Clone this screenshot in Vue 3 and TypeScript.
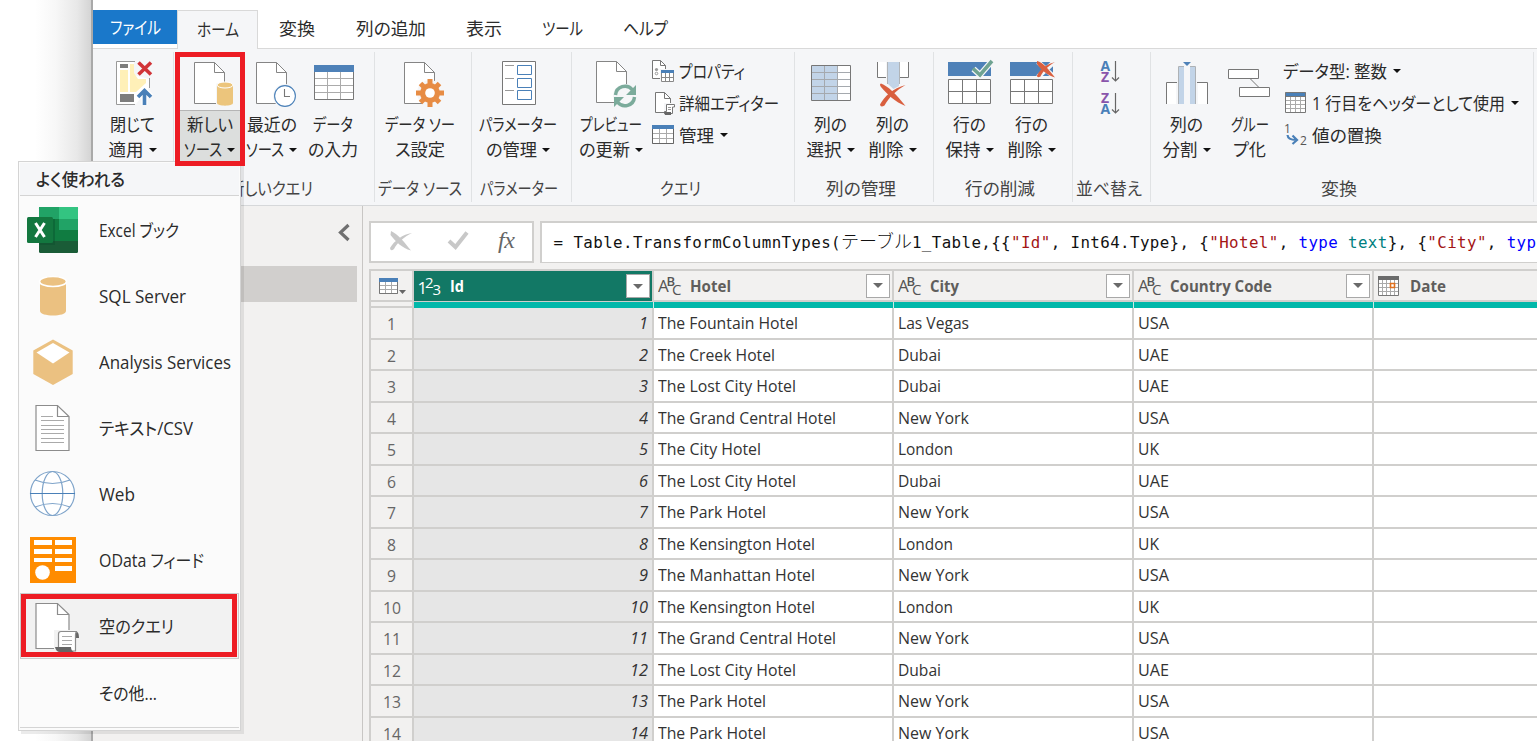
<script setup lang="ts">
import type { Directive } from 'vue'

interface Line { text: string; w: number; arrow?: boolean }
interface Button { id: string; x: number; w: number; lines: Line[]; open?: boolean }
interface Small { id: string; text: string; w: number; arrow?: boolean }
interface Group { label: string; labelW: number; w: number; pad: number; buttons: Button[]; small?: Small[] }

// Scales a run of text horizontally to the given advance width.
const vFit: Directive<HTMLElement, number> = {
  mounted(el, { value }) {
    const natural = el.getBoundingClientRect().width
    el.style.transformOrigin = '0 50%'
    el.style.transform = `scaleX(${value / natural})`
    el.style.marginRight = `${value - natural}px`
  },
}

const tabs = [
  { text: '変換', w: 36, left: 21 },
  { text: '列の追加', w: 70, left: 41 },
  { text: '表示', w: 36, left: 40 },
  { text: 'ツール', w: 41, left: 40 },
  { text: 'ヘルプ', w: 45, left: 40 },
]

const groups: Group[] = [
  { label: '', labelW: 0, w: 81, pad: 7, buttons: [
    { id: 'close', x: 100, w: 66, lines: [{ text: '閉じて', w: 45 }, { text: '適用', w: 35, arrow: true }] },
  ] },
  { label: '新しいクエリ', labelW: 84, w: 201, pad: 6, buttons: [
    { id: 'new', x: 180, w: 60, open: true, lines: [{ text: '新しい', w: 46 }, { text: 'ソース', w: 38, arrow: true }] },
    { id: 'recent', x: 240, w: 64, lines: [{ text: '最近の', w: 50 }, { text: 'ソース', w: 38, arrow: true }] },
    { id: 'enter', x: 304, w: 58, lines: [{ text: 'データ', w: 40 }, { text: 'の入力', w: 50 }] },
  ] },
  { label: 'データ ソース', labelW: 84, w: 97, pad: 0, buttons: [
    { id: 'settings', x: 375, w: 90, lines: [{ text: 'データ ソー', w: 70 }, { text: 'ス設定', w: 50 }] },
  ] },
  { label: 'パラメーター', labelW: 78, w: 100, pad: 0, buttons: [
    { id: 'params', x: 472, w: 93, lines: [{ text: 'パラメーター', w: 78 }, { text: 'の管理', w: 51, arrow: true }] },
  ] },
  { label: 'クエリ', labelW: 41, w: 223, pad: 0, buttons: [
    { id: 'preview', x: 572, w: 79, lines: [{ text: 'プレビュー', w: 62 }, { text: 'の更新', w: 51, arrow: true }] },
  ], small: [
    { id: 'props', text: 'プロパティ', w: 66 },
    { id: 'editor', text: '詳細エディター', w: 100 },
    { id: 'manage', text: '管理', w: 35, arrow: true },
  ] },
  { label: '列の管理', labelW: 70, w: 139, pad: 5, buttons: [
    { id: 'colpick', x: 800, w: 62, lines: [{ text: '列の', w: 33 }, { text: '選択', w: 35, arrow: true }] },
    { id: 'coldel', x: 862, w: 62, lines: [{ text: '列の', w: 33 }, { text: '削除', w: 35, arrow: true }] },
  ] },
  { label: '行の削減', labelW: 70, w: 139, pad: 5, buttons: [
    { id: 'rowkeep', x: 939, w: 62, lines: [{ text: '行の', w: 33 }, { text: '保持', w: 35, arrow: true }] },
    { id: 'rowdel', x: 1001, w: 62, lines: [{ text: '行の', w: 33 }, { text: '削除', w: 35, arrow: true }] },
  ] },
  { label: '並べ替え', labelW: 66, w: 78, pad: 23, buttons: [
    { id: 'sort', x: 1096, w: 30, lines: [] },
  ] },
  { label: '変換', labelW: 36, w: 383, pad: 5, buttons: [
    { id: 'split', x: 1156, w: 62, lines: [{ text: '列の', w: 33 }, { text: '分割', w: 35, arrow: true }] },
    { id: 'groupby', x: 1218, w: 64, lines: [{ text: 'グルー', w: 38 }, { text: 'プ化', w: 33 }] },
  ], small: [
    { id: '', text: 'データ型: 整数', w: 104, arrow: true },
    { id: 'header', text: '1 行目をヘッダーとして使用', w: 193, arrow: true },
    { id: 'replace', text: '値の置換', w: 70 },
  ] },
]

const menu = [
  { id: 'excel', text: 'Excel ブック', w: 80 },
  { id: 'sql', text: 'SQL Server', w: 87 },
  { id: 'cube', text: 'Analysis Services', w: 132 },
  { id: 'csv', text: 'テキスト/CSV', w: 94 },
  { id: 'web', text: 'Web', w: 36 },
  { id: 'odata', text: 'OData フィード', w: 105 },
  { id: 'blank', text: '空のクエリ', w: 75 },
  { id: 'more', text: 'その他...', w: 58 },
]

const columns = [
  { name: 'Id', w: 14, kind: 'num' },
  { name: 'Hotel', w: 41, kind: 'abc' },
  { name: 'City', w: 29, kind: 'abc' },
  { name: 'Country Code', w: 102, kind: 'abc' },
  { name: 'Date', w: 36, kind: 'date' },
]

const widths: Record<string, number> = {
  'The Fountain Hotel': 140, 'The Creek Hotel': 117, 'The Lost City Hotel': 138, 'The Grand Central Hotel': 178,
  'The City Hotel': 103, 'The Park Hotel': 108, 'The Kensington Hotel': 157, 'The Manhattan Hotel': 157,
  'Las Vegas': 71, Dubai: 43, 'New York': 71, London: 55, USA: 31, UAE: 31, UK: 21,
}

const rows: string[][] = [
  ['The Fountain Hotel', 'Las Vegas', 'USA'],
  ['The Creek Hotel', 'Dubai', 'UAE'],
  ['The Lost City Hotel', 'Dubai', 'UAE'],
  ['The Grand Central Hotel', 'New York', 'USA'],
  ['The City Hotel', 'London', 'UK'],
  ['The Lost City Hotel', 'Dubai', 'UAE'],
  ['The Park Hotel', 'New York', 'USA'],
  ['The Kensington Hotel', 'London', 'UK'],
  ['The Manhattan Hotel', 'New York', 'USA'],
  ['The Kensington Hotel', 'London', 'UK'],
  ['The Grand Central Hotel', 'New York', 'USA'],
  ['The Lost City Hotel', 'Dubai', 'UAE'],
  ['The Park Hotel', 'New York', 'USA'],
  ['The Park Hotel', 'New York', 'USA'],
]
</script>

<template>
  <div class="screen">
    <aside class="edge"></aside>
    <div class="window">
      <nav class="tabs">
        <div class="tab file"><span v-fit="51" class="t">ファイル</span></div>
        <div class="tab home"><span v-fit="42" class="t">ホーム</span></div>
        <div v-for="t in tabs" :key="t.text" class="tab" :style="{ marginLeft: t.left + 'px' }">
          <span v-fit="t.w" class="t">{{ t.text }}</span>
        </div>
      </nav>

      <section class="ribbon">
        <div v-for="(g, gi) in groups" :key="gi" class="group" :style="{ width: g.w + 'px' }">
          <div class="body" :style="{ paddingLeft: g.pad + 'px' }">
            <div v-for="b in g.buttons" :key="b.id" class="btn" :style="{ width: b.w + 'px' }">
              <svg :width="b.w" :height="b.id === 'sort' ? 70 : 58" :viewBox="`${b.x} 52 ${b.w} ${b.id === 'sort' ? 70 : 58}`" fill="none">
                <template v-if="b.id === 'close'">
                  <path d="M135 61.500H116.500V104.500H135M149.500 78V88" stroke="#999" />
                  <path d="M117 62H134V75L149 79V88L136 104H117Z" fill="#fff" />
                  <path d="M120 70H128V92H120ZM130 64H134V73L138 79H146V83L136 92H130Z" fill="#fff0b8" />
                  <path d="M120 64H128V68H120ZM120 94H134V102H120Z" fill="#7d7d7d" />
                  <path d="M138.500 62.500L151 74.500M151 62.500L138.500 74.500" stroke="#d13438" stroke-width="3.600" />
                  <path d="M144.500 105V91M138 96.500L144.500 90L151 96.500" stroke="#fff" stroke-width="6" />
                  <path d="M144.500 105V91M138 97L144.500 90.500L151 97" stroke="#4a80b8" stroke-width="3.600" />
                </template>
                <template v-else-if="b.id === 'new'">
                  <path d="M194.500 62.500H214.500L224.500 72.500V103.500H194.500Z" fill="#fff" stroke="#858585" />
                  <path d="M214.500 62.500V72.500H224.500" stroke="#858585" />
                  <path d="M216 83.500H235V107H216Z" fill="#f5f6f8" />
                  <path d="M217 85V103C217 106.500 233 106.500 233 103V85Z" fill="#ecc57c" />
                  <ellipse cx="225" cy="85" rx="8" ry="3" fill="#ecc57c" stroke="#fff" />
                </template>
                <template v-else-if="b.id === 'recent'">
                  <path d="M256.500 62.500H276.500L286.500 72.500V103.500H256.500Z" fill="#fff" stroke="#858585" />
                  <path d="M276.500 62.500V72.500H286.500" stroke="#858585" />
                  <circle cx="285" cy="96" r="12" fill="#f5f6f8" />
                  <circle cx="285" cy="96" r="10.400" fill="#fff" stroke="#4a80b8" stroke-width="1.100" />
                  <path d="M284.500 89V96.500H290" stroke="#777" stroke-width="1.100" />
                </template>
                <template v-else-if="b.id === 'enter'">
                  <path d="M314.500 65.500H353.500V99.500H314.500Z" fill="#fff" />
                  <path d="M314 78.500H354M314 85.500H354M314 92.500H354M327.500 71V99M340.500 71V99" stroke="#ababab" />
                  <path d="M314.500 65.500H353.500V99.500H314.500Z" stroke="#777" />
                  <path d="M314 65H354V72H314Z" fill="#4e81b8" />
                </template>
                <template v-else-if="b.id === 'settings'">
                  <path d="M404.500 62.500H424.500L434.500 72.500V103.500H404.500Z" fill="#fff" stroke="#858585" />
                  <path d="M424.500 62.500V72.500H434.500" stroke="#858585" />
                  <circle cx="430" cy="93" r="13" fill="#f5f6f8" />
                  <g stroke="#e78c44" stroke-width="5">
                    <path d="M430 79V107M416 93H444M420.500 83.500L439.500 102.500M439.500 83.500L420.500 102.500" />
                  </g>
                  <circle cx="430" cy="93" r="10" fill="#e78c44" />
                  <circle cx="430" cy="93" r="4.800" fill="#fff" />
                </template>
                <template v-else-if="b.id === 'params'">
                  <path d="M502.500 61.500H535.500V104.500H502.500Z" fill="#fff" stroke="#777" />
                  <path d="M505 65.500H514M505 78.500H514M505 90.500H514" stroke="#999" />
                  <path d="M517.500 65.500H531.500V74.500H517.500ZM517.500 78.500H531.500V87.500H517.500ZM517.500 90.500H531.500V99.500H517.500Z" stroke="#4a80b8" />
                </template>
                <template v-else-if="b.id === 'preview'">
                  <path d="M596.500 61.500H616.500L626.500 71.500V102.500H596.500Z" fill="#fff" stroke="#858585" />
                  <path d="M616.500 61.500V71.500H626.500" stroke="#858585" />
                  <circle cx="625" cy="96" r="12" fill="#f5f6f8" />
                  <path d="M615.500 95A9.500 9.500 0 0 1 632.500 90M634.500 97A9.500 9.500 0 0 1 617.500 102" stroke="#7bab9b" stroke-width="3.400" />
                  <path d="M636 85V95H626ZM614 107V97H624Z" fill="#7bab9b" />
                </template>
                <template v-else-if="b.id === 'colpick'">
                  <path d="M811.500 65.500H850.500V100.500H811.500Z" fill="#fff" />
                  <path d="M812 66H837V100H812Z" fill="#c2d4e8" />
                  <path d="M812 72.500H850M812 79.500H850M812 86.500H850M812 93.500H850M824.500 66V100M837.500 66V100" stroke="#a5a9ae" />
                  <path d="M811.500 65.500H850.500V100.500H811.500Z" stroke="#777" />
                </template>
                <template v-else-if="b.id === 'coldel'">
                  <path d="M877.500 62V77.500H886V62M908.500 62V77.500H900V62" fill="#fff" />
                  <path d="M877.500 62V77.500H886M908.500 62V77.500H900" stroke="#777" />
                  <path d="M888 62H899V86L893.500 89L888 84Z" fill="#c2d4e8" />
                  <path d="M887.500 62V84M899.500 62V84" stroke="#b0b4b8" />
                  <path d="M881 83.500C888 86 896 94 905.500 106C895 102 888 95 881 87Q879 84 881 83.500Z" fill="#d95f3f" />
                  <path d="M905.500 85C897 90 889 97 884.500 105.500Q880.500 108 880 104.500C884 97 893 88 905.500 85Z" fill="#d95f3f" />
                </template>
                <template v-else-if="b.id === 'rowkeep'">
                  <path d="M948 62H991V76H948Z" fill="#4e81b8" />
                  <path d="M948.500 79.500H990.500V103.500H948.500ZM948.500 91.500H990.500M962.500 79.500V103.500M976.500 79.500V103.500" fill="#fff" stroke="#777" />
                  <path d="M973.500 69L980 75L992 61" stroke="#f5f6f8" stroke-width="6" />
                  <path d="M973 68.500L980 75L992 61" stroke="#6fa391" stroke-width="3.600" />
                </template>
                <template v-else-if="b.id === 'rowdel'">
                  <path d="M1010 62H1053V76H1010Z" fill="#4e81b8" />
                  <path d="M1010.500 79.500H1052.500V103.500H1010.500ZM1010.500 91.500H1052.500M1024.500 79.500V103.500M1038.500 79.500V103.500" fill="#fff" stroke="#777" />
                  <path d="M1038 62L1054 77M1054 62L1038 77" stroke="#f5f6f8" stroke-width="5" />
                  <path d="M1037 61C1043 62 1049 70 1055 77.500C1047 75 1041 70 1037 64ZM1055 62C1048 66 1043 71 1040.500 76.500Q1037 78.500 1037 75.500C1040 69 1047 64 1055 62Z" fill="#d95f3f" />
                </template>
                <template v-else-if="b.id === 'sort'">
                  <g class="az">
                    <text x="1100.500" y="70.500" fill="#4a80b8">A</text><text x="1101" y="82" fill="#8a55ab">Z</text>
                    <text x="1101" y="102.500" fill="#8a55ab">Z</text><text x="1100.500" y="114" fill="#4a80b8">A</text>
                  </g>
                  <path d="M1115.500 61V81M1112 77.500L1115.500 81L1119 77.500M1115.500 93V113M1112 109.500L1115.500 113L1119 109.500" stroke="#666" stroke-width="1.200" />
                </template>
                <template v-else-if="b.id === 'split'">
                  <path d="M1166.500 104V82.500H1176V104M1207.500 104V82.500H1198V104" fill="#fff" stroke="none" />
                  <path d="M1166.500 104V82.500H1177M1207.500 104V82.500H1197" stroke="#777" />
                  <path d="M1179 66H1184V104H1179ZM1190 66H1195V104H1190Z" fill="#c2d4e8" />
                  <path d="M1178.500 104V66.500H1184M1195.500 104V66.500H1190" stroke="#aeb2b6" />
                  <path d="M1183 62H1191L1187 66Z" fill="#4e81b8" />
                </template>
                <template v-else-if="b.id === 'groupby'">
                  <path d="M1228.500 69.500H1258.500V78.500H1228.500ZM1239.500 87.500H1269.500V96.500H1239.500Z" fill="#fff" stroke="#777" />
                  <path d="M1250.500 79L1258.500 87" stroke="#777" />
                </template>
              </svg>
              <div v-if="b.lines.length" class="cap" :class="{ open: b.open }">
                <div v-for="l in b.lines" :key="l.text" class="line">
                  <span v-fit="l.w" class="t">{{ l.text }}</span><i v-if="l.arrow" class="arrow"></i>
                </div>
              </div>
            </div>
            <div v-if="g.small" class="smalls" :class="{ wide: g.label === '変換' }">
              <div v-for="s in g.small" :key="s.text" class="small">
                <svg v-if="s.id" class="ico" width="24" height="24" fill="none">
                  <template v-if="s.id === 'props'">
                    <path d="M1.500 1.500H9.500L14.500 6.500V19.500H1.500Z" fill="#fff" stroke="#777" /><path d="M9.500 1.500V6.500H14.500" stroke="#777" />
                    <circle cx="5.500" cy="10.500" r="1.600" fill="#999" /><circle cx="5.500" cy="14.500" r="1.300" stroke="#999" />
                    <path d="M9 10H24V24H9Z" fill="#f5f6f8" /><path d="M10.500 11.500H22.500V22.500H10.500ZM10.500 18.500H22.500M14.500 12V22M18.500 12V22" fill="#fff" stroke="#888" /><path d="M10 11H23V14H10Z" fill="#4a80b8" />
                  </template>
                  <template v-else-if="s.id === 'editor'">
                    <path d="M4.500 1.500H13.500L19.500 7.500V21.500H4.500Z" fill="#fff" stroke="#777" /><path d="M13.500 1.500V7.500H19.500" stroke="#777" />
                    <path d="M13 12H24V24H13Z" fill="#f5f6f8" /><path d="M15.500 13.500H23.500V16H21.500V22.500H13.500V20.500H15.500Z" fill="#fff" stroke="#777" /><path d="M17 16.500H20M17 18.500H20" stroke="#999" /><path d="M13 21H20V24H14Z" fill="#666" />
                  </template>
                  <template v-else-if="s.id === 'manage'">
                    <path d="M1.500 2.500H22.500V20.500H1.500ZM1.500 10.500H22.500M1.500 15.500H22.500M8.500 5V20M15.500 5V20" fill="#fff" stroke="#aaa" /><path d="M1.500 2.500H22.500V20.500H1.500Z" stroke="#666" /><path d="M1 2H23V6H1Z" fill="#4a80b8" />
                  </template>
                  <template v-else-if="s.id === 'header'">
                    <path d="M2 1H23V22H2Z" fill="#fff" /><path d="M2 9.500H23M2 13.500H23M2 17.500H23M7.500 5V21M12.500 5V21M17.500 5V21" stroke="#aaa" /><path d="M2 1.500H23V5H2Z" fill="#4a80b8" /><path d="M2.500 1.500H22.500V21.500H2.500ZM2.500 5.500H22.500" stroke="#777" />
                  </template>
                  <template v-else-if="s.id === 'replace'">
                    <text x="1" y="10" class="n">1</text><text x="17" y="21.500" class="n">2</text>
                    <path d="M4.500 12Q5 17 13 17M9.500 12.500L14 17L9.500 21" stroke="#4a80b8" stroke-width="2.200" />
                  </template>
                </svg>
                <span v-fit="s.w" class="t">{{ s.text }}</span><i v-if="s.arrow" class="arrow"></i>
              </div>
            </div>
          </div>
          <div class="label"><span v-if="g.label" v-fit="g.labelW" class="t">{{ g.label }}</span></div>
        </div>
      </section>

      <main class="work">
        <div class="queries">
          <svg class="chev" width="13" height="19" viewBox="337 223 13 19" fill="none"><path d="M348.500 225L340.500 232.500L348.500 240" stroke="#707070" stroke-width="3.200" /></svg>
          <div class="selected"></div>
        </div>
        <div class="editor">
          <div class="formula">
            <div class="tools">
              <svg width="161" height="38" viewBox="371 223 161 38" fill="none">
                <path d="M391 231C398 234 405 243 411 250.500C402 248 396 242 390.500 235ZM412 233C404 237 397 243 394 249Q390.500 252 390 248C394 241 403 234 412 233Z" fill="#c8c8c8" />
                <path d="M449 241L455.500 247L467 232.500" stroke="#c8c8c8" stroke-width="4" />
                <text x="498" y="247.500" class="fx" textLength="17">fx</text>
              </svg>
            </div>
            <div class="code"><span>= Table.TransformColumnTypes(</span><span class="jp">テーブル</span><span>1_Table,{{ '{' }}{{ '{' }}<b>"Id"</b>, Int64.Type}, {<b>"Hotel"</b>, <em>type</em> <u>text</u>}, {<b>"City"</b>, <em>typ</em></span></div>
          </div>

          <div class="grid">
            <div class="ghead">
              <div class="corner">
                <svg width="41" height="29" viewBox="371 271 41 29" fill="none">
                  <path d="M379.500 278.500H397.500V293.500H379.500ZM379.500 285.500H397.500M379.500 289.500H397.500M385.500 281V293M391.500 281V293" fill="#fff" stroke="#aaa" /><path d="M379.500 278.500H397.500V293.500H379.500Z" stroke="#777" />
                  <path d="M379 278H398V282H379Z" fill="#4a80b8" /><path d="M399 290H406L402.500 294Z" fill="#666" />
                </svg>
              </div>
              <div v-for="c in columns" :key="c.name" class="hcell" :class="c.kind">
                <svg v-if="c.kind === 'num'" class="type" width="26" height="28"><text x="-.5" y="22" class="k n1" fill="#fff">1</text><text x="7" y="16" class="k s" fill="#fff">2</text><text x="14.500" y="23" class="k s" fill="#fff">3</text></svg>
                <svg v-else-if="c.kind === 'abc'" class="type" width="26" height="28"><text x="0" y="20" class="k a">A</text><text x="8.500" y="14" class="k b">B</text><text x="14" y="23" class="k c">C</text></svg>
                <svg v-else class="type" width="26" height="28" fill="none">
                  <path d="M.5 4.500H20.500V23.500H.5Z" fill="#fff" /><path d="M1 11.500H20M1 15.500H20M1 19.500H20M4.500 8V23M8.500 8V23M12.500 8V23M16.500 8V23" stroke="#aaa" /><path d="M.5 4.500H20.500V23.500H.5Z" stroke="#777" /><path d="M0 4H21V8H0Z" fill="#6b6b6b" /><path d="M12.500 11.500H16.500V15.500H12.500Z" fill="#fff" stroke="#e0701d" stroke-width="1.600" />
                </svg>
                <span class="hname"><span v-fit="c.w" class="t">{{ c.name }}</span></span>
                <span v-if="c.kind !== 'date'" class="drop"><i class="arrow"></i></span>
              </div>
            </div>
            <div class="quality"><span class="qn"></span><span v-for="c in columns" :key="c.name" class="q"></span></div>
            <div v-for="(r, i) in rows" :key="i" class="row">
              <div class="rn"><span v-fit="i < 9 ? 9 : 18" class="t">{{ i + 1 }}</span></div>
              <div class="cell id"><span v-fit="i < 9 ? 9 : 18" class="t">{{ i + 1 }}</span></div>
              <div v-for="(v, j) in r" :key="j" class="cell"><span v-fit="widths[v]" class="t">{{ v }}</span></div>
              <div class="cell"></div>
            </div>
          </div>
        </div>
      </main>
    </div>

    <div class="menu">
      <div class="mhead"><span v-fit="89" class="t">よく使われる</span></div>
      <div v-for="(m, i) in menu" :key="m.id" class="item" :class="{ hover: m.id === 'blank' }">
        <svg width="79" height="66" :viewBox="`20 ${197 + i * 66} 79 66`" fill="none">
          <template v-if="m.id === 'excel'">
            <rect x="39" y="207" width="39" height="46" rx="1.500" fill="#1a5c37" />
            <path d="M39 207H59V219H39Z" fill="#21a366" /><path d="M59 207H78V219H59Z" fill="#33c481" /><path d="M39 219H59V241H39Z" fill="#107c41" /><path d="M59 219H78V230H59Z" fill="#21a366" /><path d="M59 230H78V241H59Z" fill="#107c41" />
            <path d="M39 219H55V245H39Z" fill="#0b4e2a" opacity=".4" />
            <rect x="27" y="217" width="26" height="26" rx="1.500" fill="#13773f" />
            <path d="M35.500 223L44.500 237M44.500 223L35.500 237" stroke="#fff" stroke-width="3" />
          </template>
          <template v-else-if="m.id === 'sql'">
            <path d="M40 282V311C40 317 66 317 66 311V282Z" fill="#ebc181" /><ellipse cx="53" cy="281.500" rx="13.500" ry="5" fill="#ebc181" stroke="#fff" stroke-width="1.600" />
          </template>
          <template v-else-if="m.id === 'cube'">
            <path d="M53 339.500L72.700 350.500V374L53 385L33.300 374V350.500Z" fill="#ebc181" /><path d="M53 343L69.500 352.500L53 363.500L36.500 352.500Z" fill="#fff" />
          </template>
          <template v-else-if="m.id === 'csv'">
            <path d="M36 405.500H57.500L69 416.500V450.500H36Z" fill="#fff" stroke="#8c8c8c" stroke-width="1.200" /><path d="M57.500 405.500V416.500H69" stroke="#8c8c8c" stroke-width="1.200" />
            <path d="M41 416.500H53M41 420.500H64M41 425.500H64M41 429.500H64M41 433.500H64M41 438.500H64M41 442.500H64" stroke="#aaa" />
          </template>
          <template v-else-if="m.id === 'web'">
            <g stroke="#7fa4ca" stroke-width="1.200"><circle cx="52.500" cy="493.500" r="22" fill="#fff" /><ellipse cx="52.500" cy="493.500" rx="10.300" ry="22" /><path d="M35 480Q52.500 487 70 480M35 507Q52.500 500 70 507" /><path d="M30 493.500H75" stroke="#4a80b8" /></g>
          </template>
          <template v-else-if="m.id === 'odata'">
            <path d="M30 537H76V583H30Z" fill="#ff8c00" />
            <path d="M34 540H52V545H34ZM55 540H72V545H55ZM34 549H52V554H34ZM55 549H72V554H55ZM34 558H52V562H34ZM55 558H72V562H55ZM55 566H72V571H55Z" fill="#fff" /><circle cx="42.500" cy="572.500" r="8.500" fill="#ff8c00" /><circle cx="42.500" cy="572.500" r="7.300" fill="#fff" />
          </template>
          <template v-else-if="m.id === 'blank'">
            <path d="M36 603.500H57.500L69 614.500V648.500H36Z" fill="#fff" stroke="#8c8c8c" stroke-width="1.200" /><path d="M57.500 603.500V614.500H69" stroke="#8c8c8c" stroke-width="1.200" />
            <path d="M54 630H81V654H54Z" fill="#f2f2f2" /><path d="M76 631.500Q79 631.500 79 638H76Z" fill="#666" /><path d="M58.500 648V634Q58.500 631.500 61 631.500H77Q75.500 632 75.500 635V651H60Z" fill="#fff" stroke="#8c8c8c" stroke-width="1.200" />
            <path d="M62 636.500H72M62 640.500H72M62 644.500H72" stroke="#aaa" /><path d="M55 647H71Q71 651 74 652H60Q56 652 55 647Z" fill="#666" />
          </template>
        </svg>
        <span v-fit="m.w" class="t">{{ m.text }}</span>
      </div>
    </div>
    <div class="mark source"></div>
    <div class="mark query"></div>
  </div>
</template>

<style>
body { margin: 0; }
</style>

<style scoped>
* { box-sizing: border-box; }
.screen { position: relative; width: 1537px; height: 741px; overflow: hidden; display: flex; background: #fff; color: #2b2b2b; font: 17.5px/25px "Open Sans", "Noto Sans CJK JP", sans-serif; }
.t { display: inline-block; flex: none; white-space: pre; font-feature-settings: "palt"; }
.edge { width: 93px; flex: none; border-right: 2px solid #a9a9a9; background: linear-gradient(90deg, #fff 35px, #f7f7f7 56px, #e8e8e8 77px, #d4d4d4 91px); }
.window { flex: none; width: 1444px; height: 741px; display: flex; flex-direction: column; }
.tabs { height: 49px; flex: none; padding-top: 10px; display: flex; border-bottom: 1px solid #d9d9d9; }
.tab { display: flex; height: 37px; align-items: center; flex: none; }
.tab.file { width: 84px; height: 34px; justify-content: center; background: #1a78ca; color: #fff; }
.tab.home { width: 81px; height: 39px; justify-content: center; background: #f5f6f8; border: 1px solid #d9d9d9; border-bottom: 0; padding-bottom: 2px; }
.ribbon { height: 157px; flex: none; display: flex; background: #f5f6f8; border-bottom: 1px solid #d6d8da; padding-top: 3px; }
.group { flex: none; height: 150px; border-right: 1px solid #e0e2e4; display: flex; flex-direction: column; }
.body { display: flex; height: 123px; flex: none; }
.btn { flex: none; display: flex; flex-direction: column; }
.btn svg { display: block; flex: none; }
.cap { height: 51px; border-top: 1px solid transparent; padding-top: 1px; }
.cap.open { background: #dcdedd; border-color: #b5b5b5; }
.line { height: 25px; padding-right: 1px; display: flex; align-items: center; justify-content: center; }
.arrow { flex: none; width: 0; height: 0; margin-left: 5px; border: 4px solid transparent; border-top-color: #111; border-bottom: 0; }
.smalls { padding-top: 3px; }
.smalls.wide { padding-left: 1px; }
.small { height: 32px; display: flex; align-items: center; }
.small .arrow { margin-left: 6px; }
.ico { flex: none; margin-right: 4px; }
.wide .ico { margin-right: 5px; }
.az { font: bold 14px/1 "Open Sans", sans-serif; }
.n { font: 12px "Open Sans", sans-serif; fill: #555; }
.label { height: 26px; padding-right: 6px; display: flex; justify-content: center; align-items: center; color: #444; }
.work { flex: 1; display: flex; background: #f2f1f0; min-height: 0; }
.queries { width: 270px; flex: none; border-right: 1px solid #c8c6c4; }
.chev { display: block; margin: 17px 0 0 244px; }
.selected { width: 264px; height: 36px; margin-top: 24px; background: #d1cfcd; }
.editor { width: 1174px; padding: 15px 0 0 6px; overflow: hidden; }
.formula { display: flex; gap: 6px; height: 42px; }
.tools { width: 165px; flex: none; background: #fff; border: 2px solid #d0cfcd; }
.tools svg { display: block; }
.fx { font: italic 24px "Liberation Serif", serif; fill: #666; }
.code { flex: none; width: 1100px; overflow: hidden; background: #fff; border: 2px solid #d0cfcd; border-bottom-width: 1px; padding-left: 11.6px; color: #111; white-space: pre; font: 15.8px/36px "DejaVu Sans Mono", monospace; letter-spacing: .4px; }
.code b { font-weight: 400; color: #a31515; }
.code em { font-style: normal; color: #00f; }
.code u { text-decoration: none; color: #008080; }
.code .jp { font: 18px/35px "Noto Sans CJK JP", sans-serif; letter-spacing: 0; font-weight: 300; }
.grid { margin-top: 6px; width: 1300px; border: 2px solid #d0cfcd; }
.ghead { display: flex; height: 31px; }
.corner { width: 43px; flex: none; border-right: 2px solid #d0cfcd; border-bottom: 2px solid #d0cfcd; }
.corner svg { display: block; }
.hcell { width: 240px; flex: none; display: flex; align-items: center; padding-left: 4px; border-right: 2px solid #d0cfcd; border-bottom: 2px solid #d0cfcd; color: #605e5c; font-weight: 700; font-size: 15.5px; }
.hcell.num { background: #127865; color: #fff; border-bottom: 1px solid #d0cfcd; }
.type { flex: none; }
.hname { width: 182px; flex: none; padding: 1px 0 0 6px; display: flex; }
.k { font: 17px "Open Sans", sans-serif; }
.k.n1 { font-size: 17px; }
.k.s { font-size: 15px; }
.k.a { font-size: 17px; fill: #555; }
.k.b { font-size: 13px; fill: #555; font-weight: 600; }
.k.c { font-size: 15px; fill: #555; }
.drop { width: 24px; height: 24px; flex: none; border: 1px solid #a8a8a8; background: #fff; display: flex; align-items: center; justify-content: center; }
.drop .arrow { margin: 0; border-width: 5px; border-bottom: 0; border-top-color: #6a6a6a; }
.quality { display: flex; height: 6px; }
.qn { width: 43px; flex: none; border-right: 2px solid #d0cfcd; border-bottom: 2px solid #d0cfcd; }
.q { width: 240px; flex: none; background: #01b8aa; border-right: 1px solid #d0e8e4; }
.row { display: flex; height: 31.5px; font-size: 16px; }
.rn { width: 43px; flex: none; padding-top: 1.500px; display: flex; align-items: center; justify-content: center; border-right: 2px solid #d0cfcd; border-bottom: 2px solid #d0cfcd; color: #666; font-size: 17px; }
.cell { width: 240px; flex: none; padding: 1.500px 4px 0 4px; display: flex; align-items: center; background: #fff; border-right: 2px solid #d0cfcd; border-bottom: 2px solid #d0cfcd; color: #333; }
.cell.id { justify-content: flex-end; background: #e6e6e6; font-style: italic; }
.menu { position: absolute; left: 18px; top: 161px; width: 223px; height: 570px; padding: 1px; background: #fbfbfb; border: 1px solid #d4d4d4; box-shadow: 3px 3px 0 rgba(0, 0, 0, .08); }
.mhead { height: 33px; margin-bottom: 1px; padding-left: 16px; display: flex; align-items: center; background: #f5f6f8; border-bottom: 1px solid #d4d4d4; font-weight: 500; }
.item { height: 66px; display: flex; align-items: center; }
.item svg { flex: none; }
.item:last-child { height: 69px; border-bottom: 1px solid #d4d4d4; }
.item.hover { background: #f2f2f2; border: 1px solid #ccc; }
.item.hover svg { margin-left: -1px; }
.mark { position: absolute; border: 5px solid #ed1c24; }
.mark.source { left: 175px; top: 52px; width: 70px; height: 114px; }
.mark.query { left: 21px; top: 594px; width: 216px; height: 63px; }
</style>
